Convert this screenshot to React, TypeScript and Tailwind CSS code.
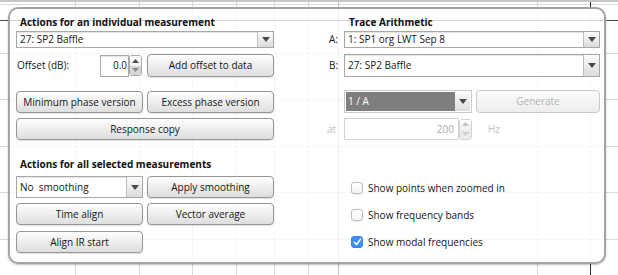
import React from "react";

const Down = ({ color = "#4a4a4a" }: { color?: string }) => (
  <svg width="8" height="5" viewBox="0 0 8 5">
    <path d="M0 0H8L4 5Z" fill={color} />
  </svg>
);
const Up = ({ color = "#4a4a4a" }: { color?: string }) => (
  <svg width="7" height="4" viewBox="0 0 7 4">
    <path d="M0 4H7L3.5 0Z" fill={color} />
  </svg>
);
const SmallDown = ({ color = "#4a4a4a" }: { color?: string }) => (
  <svg width="7" height="4" viewBox="0 0 7 4">
    <path d="M0 0H7L3.5 4Z" fill={color} />
  </svg>
);

function Combo({ text, className }: { text: string; className: string }) {
  return (
    <div
      className={`flex border border-[#a8a8a8] bg-white shadow-[inset_0_1px_1px_rgba(0,0,0,0.12)] ${className}`}
    >
      <div className="flex flex-1 items-center pl-[3px] whitespace-pre text-[#161616]">{text}</div>
      <div className="flex w-[16px] items-center justify-center border-l border-[#bdbdbd] bg-gradient-to-b from-[#fbfbfb] to-[#dcdcdc]">
        <Down />
      </div>
    </div>
  );
}

function Btn({
  children,
  className,
  disabled,
}: {
  children: React.ReactNode;
  className: string;
  disabled?: boolean;
}) {
  return (
    <div
      className={`flex items-center justify-center rounded-[4px] border whitespace-nowrap ${
        disabled
          ? "border-[#c9c9c9] bg-gradient-to-b from-[#fcfcfc] to-[#ededed] text-[#b3b3b3]"
          : "border-[#969696] bg-gradient-to-b from-[#fefefe] to-[#dedede] text-[#151515] shadow-[0_1px_1px_rgba(0,0,0,0.12)]"
      } ${className}`}
    >
      {children}
    </div>
  );
}

function Stepper({ disabled }: { disabled?: boolean }) {
  return (
    <div
      className={`flex h-[21px] w-[13px] flex-col overflow-hidden rounded-[3px] border ${
        disabled ? "border-[#d3d3d3]" : "border-[#ababab]"
      }`}
    >
      <div className="flex flex-1 items-center justify-center bg-gradient-to-b from-white to-[#f1f1f1]">
        <Up color={disabled ? "#c4c4c4" : "#4d4d4d"} />
      </div>
      <div
        className={`flex flex-1 items-center justify-center ${
          disabled ? "bg-[#ececec]" : "bg-[#d5d5d5]"
        }`}
      >
        <SmallDown color={disabled ? "#cfcfcf" : "#8a8a8a"} />
      </div>
    </div>
  );
}

function Check({ checked, label }: { checked?: boolean; label: string }) {
  return (
    <div className="flex h-[16px] items-center pl-[24px]">
      {checked ? (
        <div className="flex h-[12px] w-[12px] items-center justify-center rounded-[3px] border border-[#3a83e4] bg-[#3f8df5]">
          <svg width="9" height="8" viewBox="0 0 9 8">
            <path d="M1.3 4.3L3.5 6.5L7.7 1" fill="none" stroke="#fff" strokeWidth="1.5" strokeLinecap="round" strokeLinejoin="round" />
          </svg>
        </div>
      ) : (
        <div className="h-[12px] w-[12px] rounded-[3px] border border-[#bdbdbd] bg-gradient-to-b from-white to-[#f4f4f4] shadow-[0_0.5px_1px_rgba(0,0,0,0.08)]" />
      )}
      <span className="ml-[5px] text-[#161616]">{label}</span>
    </div>
  );
}

function Chart() {
  const hs = [4.5, 53.5, 99.5, 146.5, 192.5, 239.5];
  const vs = [75.5, 139.5, 192.5, 236.5, 274.5, 308.5, 537.5, 590.5];
  return (
    <svg className="absolute inset-0" width="618" height="275" viewBox="0 0 618 275">
      <rect x="0" y="0" width="618" height="2" fill="#c6c6c6" />
      {hs.map((y) => (
        <line key={"h" + y} x1="0" x2="618" y1={y} y2={y} stroke="#d9d9d9" strokeWidth="1" />
      ))}
      {vs.map((x) => (
        <line key={"v" + x} x1={x} x2={x} y1="2" y2="275" stroke="#d9d9d9" strokeWidth="1" />
      ))}
      <line x1="338.5" x2="338.5" y1="2" y2="275" stroke="#c2c2c2" strokeWidth="1" />
      <line x1="590.5" x2="590.5" y1="2" y2="9" stroke="#2a2a2a" strokeWidth="1" />
      <line x1="590.5" x2="590.5" y1="262" y2="275" stroke="#2a2a2a" strokeWidth="1" />
      <line x1="0" x2="618" y1="20.5" y2="20.5" stroke="#4a4a4a" strokeWidth="1" />
    </svg>
  );
}

export default function App() {
  return (
    <div className="relative h-[275px] w-[618px] overflow-hidden bg-white font-['Open_Sans',sans-serif] text-[10px] leading-[13px] text-[#161616]">
      <Chart />
      <div className="relative ml-[8px] mt-[7px] flex h-[257px] w-[598px] rounded-[10px] border-2 border-[#a4a4a4] bg-white/[0.75] shadow-[0_1px_2px_rgba(0,0,0,0.25)]">
        {/* Left column */}
        <div className="ml-[6px] flex w-[258px] flex-col">
          <div className="mt-[7px] h-[13px] pl-[4px] font-bold text-[#111]">Actions for an individual measurement</div>
          <Combo text="27: SP2 Baffle" className="mt-[2px] h-[17px]" />
          <div className="mt-[6px] flex h-[23px] items-center">
            <div className="w-[84px] pl-[1px]">Offset (dB):</div>
            <div className="flex h-[23px] w-[42px] items-center">
              <div className="flex h-[22px] flex-1 items-center justify-end border border-[#a8a8a8] bg-white pr-[1px] shadow-[inset_0_1px_1px_rgba(0,0,0,0.12)]">
                0.0
              </div>
              <Stepper />
            </div>
            <Btn className="ml-[5px] h-[23px] flex-1">Add offset to data</Btn>
          </div>
          <div className="mt-[14px] flex h-[22px] gap-[4px]">
            <Btn className="flex-1">Minimum phase version</Btn>
            <Btn className="flex-1">Excess phase version</Btn>
          </div>
          <Btn className="mt-[5px] h-[22px]">Response copy</Btn>
          <div className="mt-[18px] h-[13px] pl-[4px] font-bold text-[#111]">Actions for all selected measurements</div>
          <div className="mt-[5px] flex h-[22px] gap-[4px]">
            <Combo text="No  smoothing" className="w-[127px]" />
            <Btn className="flex-1">Apply smoothing</Btn>
          </div>
          <div className="mt-[5px] flex h-[22px] gap-[4px]">
            <Btn className="flex-1">Time align</Btn>
            <Btn className="flex-1">Vector average</Btn>
          </div>
          <div className="mt-[6px] flex h-[22px]">
            <Btn className="w-[127px]">Align IR start</Btn>
          </div>
        </div>

        {/* Right column */}
        <div className="ml-[53px] flex w-[273px] flex-col">
          <div className="mt-[7px] h-[13px] pl-[22px] font-bold text-[#111]">Trace Arithmetic</div>
          <div className="mt-[2px] flex h-[17px] items-center">
            <div className="w-[17px] pl-[2px]">A:</div>
            <Combo text="1: SP1 org LWT Sep 8" className="h-[17px] flex-1" />
          </div>
          <div className="mt-[6px] flex h-[23px] items-center">
            <div className="w-[17px] pl-[2px]">B:</div>
            <Combo text="27: SP2 Baffle" className="h-[23px] flex-1" />
          </div>
          <div className="mt-[13px] flex h-[23px] items-center">
            <div className="w-[17px]" />
            <div className="flex h-[23px] w-[128px] border border-[#cacaca] bg-white p-[1px]">
              <div className="flex flex-1 items-center bg-[#7e7e7e] pl-[2px] text-white">1 / A</div>
              <div className="flex w-[15px] items-center justify-center bg-gradient-to-b from-[#fbfbfb] to-[#dcdcdc]">
                <Down />
              </div>
            </div>
            <Btn disabled className="ml-[4px] h-[23px] flex-1">Generate</Btn>
          </div>
          <div className="mt-[5px] flex h-[22px] items-center text-[#c2c2c2]">
            <div className="w-[17px]">at</div>
            <div className="flex h-[22px] w-[128px] items-center">
              <div className="flex h-[22px] flex-1 items-center justify-end border border-[#d3d3d3] bg-white pr-[4px] text-[#ababab]">
                200
              </div>
              <Stepper disabled />
            </div>
            <div className="ml-[16px]">Hz</div>
          </div>
          <div className="mt-[40px]">
            <Check label="Show points when zoomed in" />
          </div>
          <div className="mt-[11px]">
            <Check label="Show frequency bands" />
          </div>
          <div className="mt-[11px]">
            <Check checked label="Show modal frequencies" />
          </div>
        </div>
      </div>
    </div>
  );
}
